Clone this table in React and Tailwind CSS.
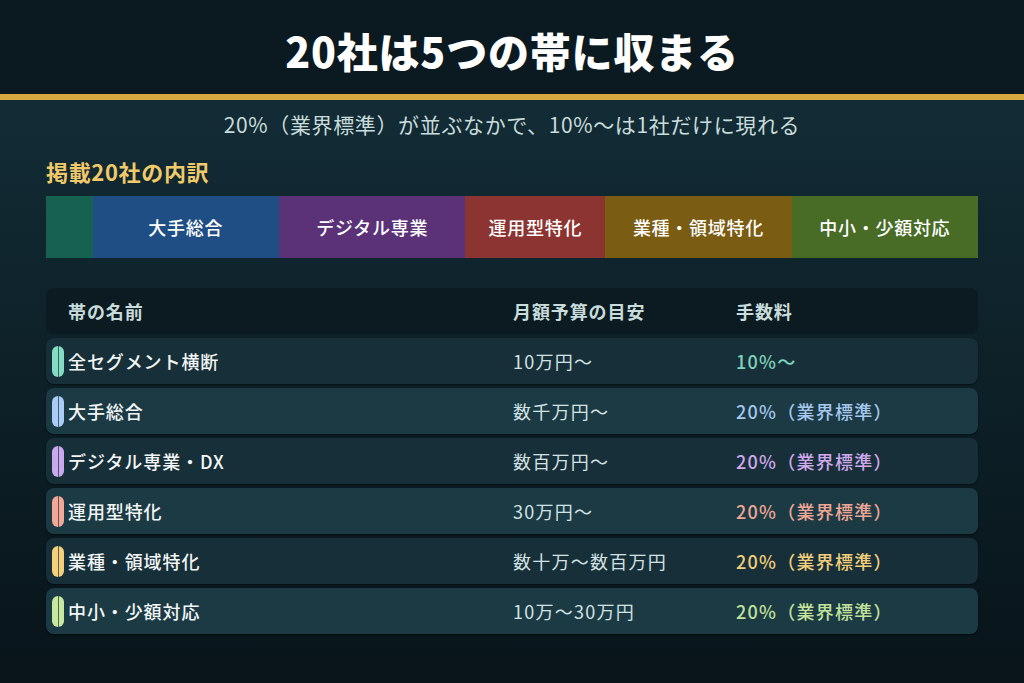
import React from "react";

const segs = [
  { label: "", grow: 1, bg: "bg-[#16614f]" },
  { label: "大手総合", grow: 4, bg: "bg-[#1f4e84]" },
  { label: "デジタル専業", grow: 4, bg: "bg-[#5b3177]" },
  { label: "運用型特化", grow: 3, bg: "bg-[#8b3431]" },
  { label: "業種・領域特化", grow: 4, bg: "bg-[#7b5c13]" },
  { label: "中小・少額対応", grow: 4, bg: "bg-[#486b26]" },
];

const rows = [
  { name: "全セグメント横断", budget: "10万円〜", fee: "10%〜", c: "text-[#7fd3bc]", m: "bg-[#85dcc4]", bg: "bg-[#172f38]" },
  { name: "大手総合", budget: "数千万円〜", fee: "20%（業界標準）", c: "text-[#a6c7ee]", m: "bg-[#a9cdf6]", bg: "bg-[#1b3a44]" },
  { name: "デジタル専業・DX", budget: "数百万円〜", fee: "20%（業界標準）", c: "text-[#cfa9ec]", m: "bg-[#caa8ee]", bg: "bg-[#172f38]" },
  { name: "運用型特化", budget: "30万円〜", fee: "20%（業界標準）", c: "text-[#eea797]", m: "bg-[#f3a897]", bg: "bg-[#1b3a44]" },
  { name: "業種・領域特化", budget: "数十万〜数百万円", fee: "20%（業界標準）", c: "text-[#f1ce7b]", m: "bg-[#f3d07c]", bg: "bg-[#172f38]" },
  { name: "中小・少額対応", budget: "10万〜30万円", fee: "20%（業界標準）", c: "text-[#c2e29b]", m: "bg-[#c6e89f]", bg: "bg-[#1b3a44]" },
];

const font = { fontFamily: '"Noto Sans CJK JP", "Noto Sans", sans-serif' };

export default function App() {
  return (
    <div className="w-[1024px] h-[683px] overflow-hidden flex flex-col bg-gradient-to-b from-[#14303a] to-[#08141a]" style={font}>
      <div className="h-[94px] bg-[#0b1a20] flex items-center justify-center">
        <h1 className="text-[41px] font-black text-white tracking-[0.02em] leading-none mt-[6px]">20社は5つの帯に収まる</h1>
      </div>
      <div className="h-[6px] bg-[#d6aa3e]" />
      <div className="flex-1 px-[46px] flex flex-col">
        <p className="text-center text-[21px] text-[#c8dcdc] mt-[11px] leading-[27px] tracking-[0.03em]">20%（業界標準）が並ぶなかで、10%〜は1社だけに現れる</p>
        <div className="mt-[19px] text-[22px] font-bold text-[#f0c96a] leading-[28px] tracking-[0.03em]">掲載20社の内訳</div>
        <div className="mt-[11px] h-[62px] flex">
          {segs.map((s, i) => (
            <div key={i} className={`${s.bg} flex items-center justify-center text-white text-[18px] font-medium tracking-[0.04em]`} style={{ flexGrow: s.grow, flexBasis: 0 }}>
              {s.label}
            </div>
          ))}
        </div>
        <div className="mt-[30px] flex flex-col gap-[4px]">
          <div className="h-[46px] rounded-[8px] bg-[#0b1b21] grid grid-cols-[445px_223px_1fr] items-center pl-[22px] text-[18px] font-bold text-[#c8dcdc] tracking-[0.05em]">
            <div>帯の名前</div>
            <div>月額予算の目安</div>
            <div>手数料</div>
          </div>
          {rows.map((r, i) => (
            <div key={i} className={`relative h-[46px] rounded-[8px] ${r.bg} shadow-[0_1px_2px_rgba(0,0,0,0.5)] grid grid-cols-[445px_223px_1fr] items-center pl-[22px] text-[18px] tracking-[0.05em]`}>
              <div className={`absolute left-[6px] top-[8px] w-[12px] h-[31px] rounded-full ${r.m} flex justify-center`}>
                <div className="w-[1px] h-full bg-[#1b3038]/70" />
              </div>
              <div className="text-[#f2f6f6] font-medium">{r.name}</div>
              <div className="text-[#d2e2e4] tracking-[0.07em]">{r.budget}</div>
              <div className={`${r.c} font-medium tracking-[0.07em]`}>{r.fee}</div>
            </div>
          ))}
        </div>
      </div>
    </div>
  );
}
